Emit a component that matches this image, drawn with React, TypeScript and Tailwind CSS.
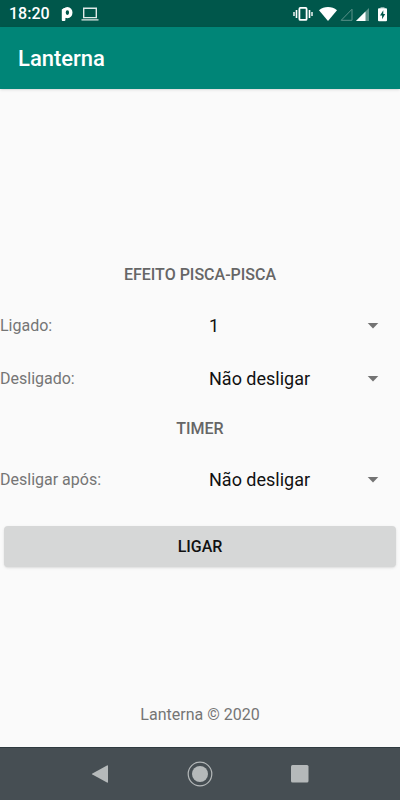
import { useState } from 'react';

const onOptions = ['1', '2', '3', '5', '10'];
const offOptions = ['Não desligar', '1', '2', '3', '5', '10'];
const timerOptions = ['Não desligar', '1 min', '5 min', '10 min', '30 min'];

interface SpinnerRowProps {
  id: string;
  label: string;
  options: string[];
}

function SpinnerRow({ id, label, options }: SpinnerRowProps) {
  const [value, setValue] = useState(options[0]);

  return (
    <div className="grid h-[53px] grid-cols-2 items-center">
      <label htmlFor={id} className="text-base text-[#757575]">{label}</label>
      <div className="relative flex items-center">
        <select
          id={id}
          value={value}
          onChange={e => setValue(e.target.value)}
          className="h-10 w-full appearance-none bg-transparent pr-12 pl-[9px] text-lg text-[#111] outline-none"
        >
          {options.map(o => (
            <option key={o}>{o}</option>
          ))}
        </select>
        <svg className="pointer-events-none absolute right-[21px] h-[6px] w-3" viewBox="0 0 12 6" fill="#737373">
          <path d="M.7 0h10.6L6 5.5z" />
        </svg>
      </div>
    </div>
  );
}

function StatusBar() {
  return (
    <div className="flex h-[27px] items-center bg-[#00574b] pr-[13px] pl-[9px] text-white">
      <span className="text-base font-medium">18:20</span>
      <svg className="ml-[11px] h-4 w-3" viewBox="0 0 12 16">
        <path d="M.8 3.6 3 2h2v9.6l-.6.4v2q0 1-1 1H1.6q-.8 0-.8-1z" fill="#fff" />
        <ellipse cx="6.4" cy="6.6" rx="3.4" ry="4" fill="#00574b" stroke="#fff" strokeWidth="3.4" />
      </svg>
      <svg className="ml-2 h-4 w-[18px]" viewBox="0 0 18 16" fill="none" stroke="#dfe9e7" strokeWidth="1.4">
        <path d="M2.7 2.2h12.6v9.4H2.7zM.5 13.9h17" />
      </svg>
      <div className="ml-auto flex items-center">
        <svg className="h-4 w-5" viewBox="0 0 20 16" fill="none" stroke="#fff">
          <rect x="6.4" y="1.9" width="7.2" height="12" rx="1" strokeWidth="1.8" />
          <path d="M3.5 4v8M16.5 4v8" strokeWidth="1.6" />
          <path d="M1 6v4M19 6v4" strokeWidth="1.4" />
        </svg>
        <svg className="ml-[6px] h-4 w-[18px]" viewBox="0 0 18 16" fill="#fff">
          <path d="M0 4.2C5 0 13 0 18 4.2L9 15z" />
        </svg>
        <svg className="ml-[3px] h-4 w-[13px]" viewBox="0 0 13 16" fill="none" stroke="#5c928a">
          <path d="M12 3.2v11.1H1.2z" />
        </svg>
        <svg className="ml-[3px] h-4 w-[13px]" viewBox="0 0 13 16">
          <path d="M13 2v13H0z" fill="#5c928a" />
          <path d="M9.5 5.5V15H0z" fill="#fff" />
        </svg>
        <svg className="ml-[9px] h-4 w-[9px]" viewBox="0 0 9 16">
          <path d="M2.5 1h4v2h-4z" fill="#7fa8a2" />
          <rect y="2.3" width="9" height="13" rx="1" fill="#fff" />
          <path d="M5.3 4.2 2 9.4h2.1v3.8L7.2 8H5.3z" fill="#00574b" />
        </svg>
      </div>
    </div>
  );
}

function NavBar() {
  return (
    <nav className="grid h-[53px] grid-cols-[1fr_100px_100px_100px_1fr] items-center border-t border-[#2f3a3f] bg-[#464e53] pb-px">
      <button aria-label="Voltar" className="col-start-2 flex justify-center">
        <svg className="h-5 w-5" viewBox="0 0 20 20" fill="#b5b9ba">
          <path d="M17 1.4Q18 .9 18 2v16q0 1.1-1 .6L2.4 10.6q-1-.6 0-1.2z" />
        </svg>
      </button>
      <button aria-label="Início" className="flex justify-center">
        <svg className="h-[26px] w-[26px]" viewBox="0 0 26 26">
          <circle cx="13" cy="13" r="11.8" fill="none" stroke="#b5b9ba" strokeWidth="1.2" />
          <circle cx="13" cy="13" r="8" fill="#b5b9ba" />
        </svg>
      </button>
      <button aria-label="Recentes" className="flex justify-center">
        <svg className="h-[18px] w-[18px]" viewBox="0 0 18 18" fill="#b5b9ba">
          <rect width="17.5" height="17.5" rx="1.5" />
        </svg>
      </button>
    </nav>
  );
}

export default function App() {
  const [on, setOn] = useState(false);

  return (
    <div className="flex min-h-screen flex-col bg-[#fafafa] font-['Roboto',sans-serif]">
      <StatusBar />
      <header className="flex h-[62px] items-center bg-[#008577] px-[18px] shadow">
        <h1 className="text-[22px] font-medium text-white">Lanterna</h1>
      </header>

      <main className="flex flex-1 flex-col pt-6">
        <div className="my-auto">
          <h2 className="flex h-12 items-center justify-center text-base font-medium text-[#666]">EFEITO PISCA-PISCA</h2>
          <SpinnerRow id="ligado" label="Ligado:" options={onOptions} />
          <SpinnerRow id="desligado" label="Desligado:" options={offOptions} />
          <h2 className="flex h-12 items-center justify-center text-base font-medium text-[#666]">TIMER</h2>
          <SpinnerRow id="timer" label="Desligar após:" options={timerOptions} />
          <div className="mt-5 px-1">
            <button
              onClick={() => setOn(!on)}
              className="h-[41px] w-full rounded-sm bg-[#d6d7d7] text-base font-medium text-[#111] shadow"
            >
              {on ? 'DESLIGAR' : 'LIGAR'}
            </button>
          </div>
        </div>
        <footer className="pb-[22px] text-center text-base leading-5 text-[#757575]">Lanterna © 2020</footer>
      </main>

      <NavBar />
    </div>
  );
}
